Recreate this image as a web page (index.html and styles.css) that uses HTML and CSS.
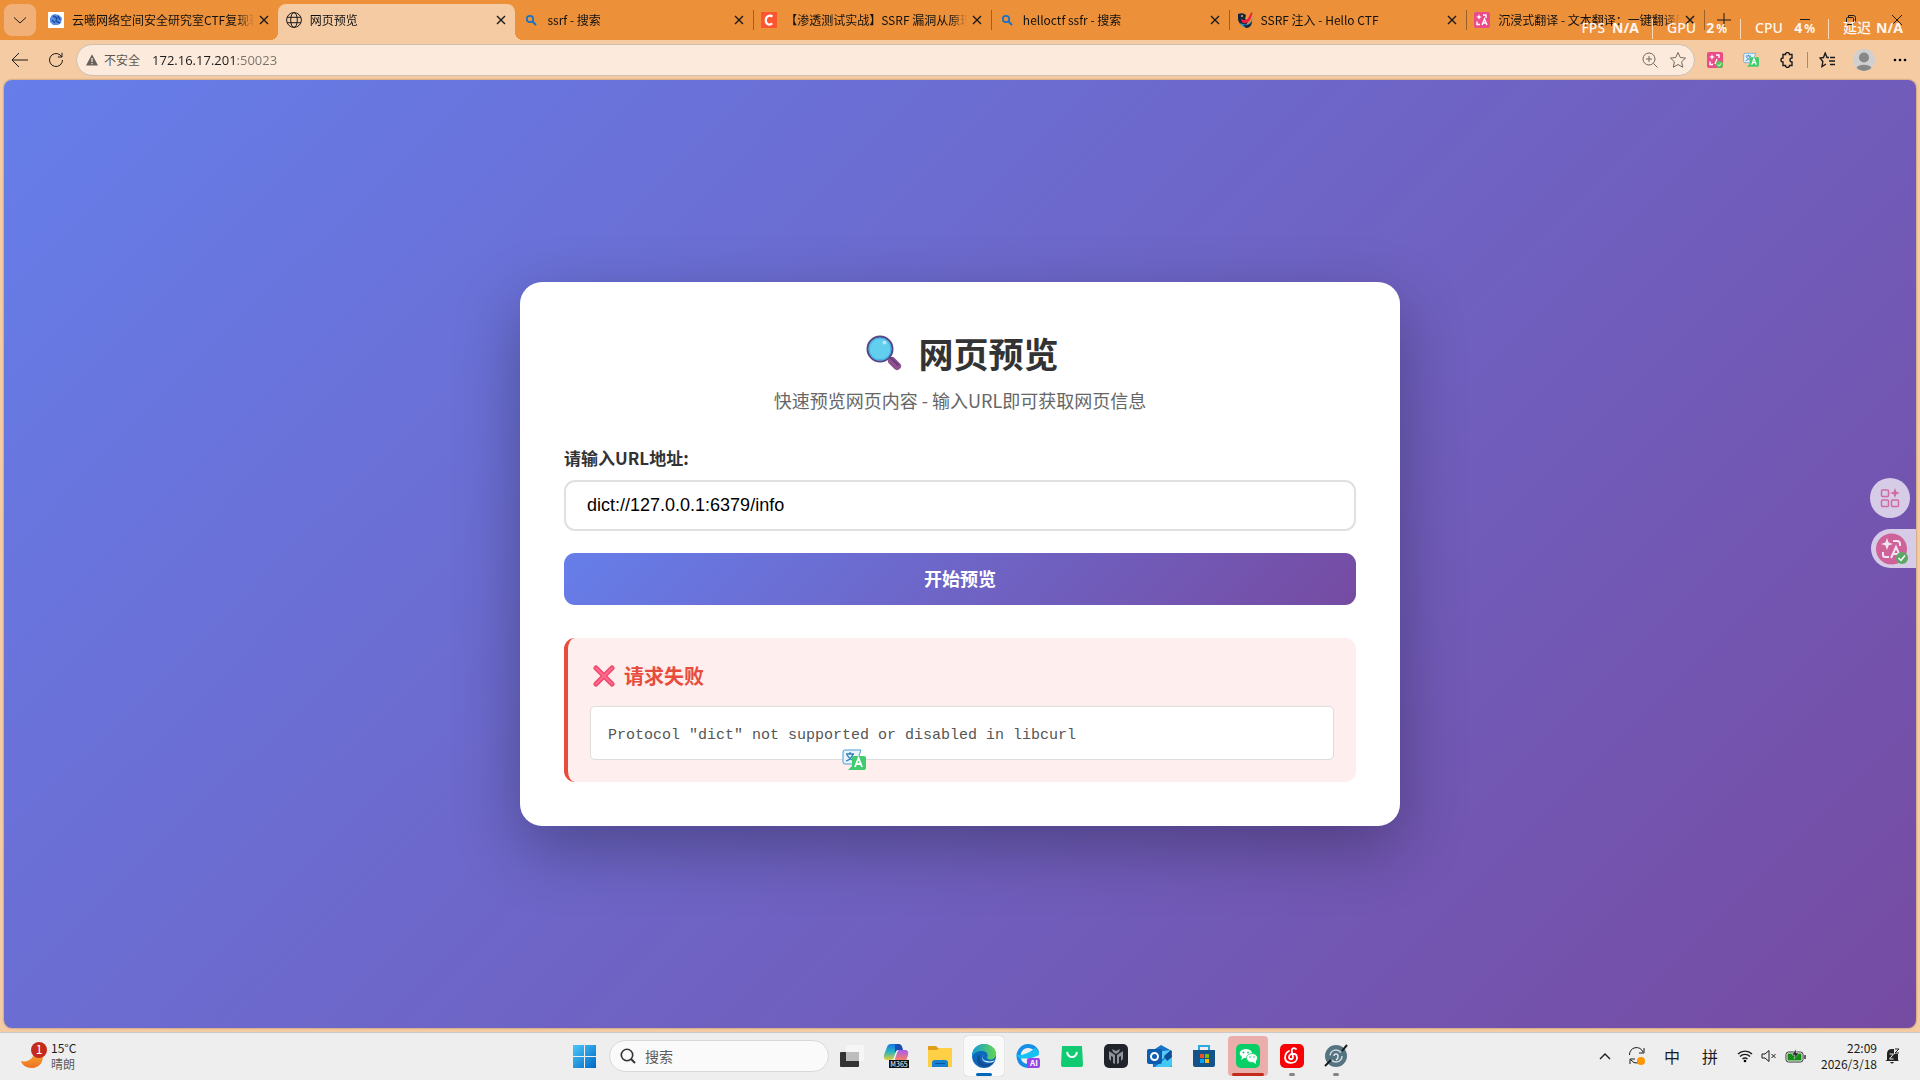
FILE: index.html
```html
<!DOCTYPE html>
<html lang="zh-CN">
<head>
    <meta charset="UTF-8">
    <title>网页预览</title>
    <link rel="stylesheet" href="styles.css">
</head>
<body>
    <!-- tab strip -->
    <header class="tab-strip">
        <button class="tab-menu" aria-label="标签页">
            <svg width="16" height="16" viewBox="0 0 16 16"><path class="line" d="M2 5.5l6 5.5 6-5.5"/></svg>
        </button>
        <nav class="tabs">
            <div class="tab no-divider">
                <svg class="tab-icon" viewBox="0 0 16 16"><rect width="16" height="16" fill="#fff"/><path d="M4 3l3-1 4 1 3 3-1 5-3 2-5 0-3-3 0-4z" fill="#5c8fe0"/><path d="M5 4l4 2-1 3 4 2M4 8l3 3M10 4l2 4" stroke="#1c4da8" stroke-width="1.5" fill="none"/></svg>
                <span class="tab-title">云曦网络空间安全研究室CTF复现靶场</span>
                <button class="tab-close" aria-label="关闭"><svg width="10" height="10" viewBox="0 0 10 10"><path class="line strong" d="M1 1l8 8M9 1l-8 8"/></svg></button>
            </div>
            <div class="tab active">
                <svg class="tab-icon" viewBox="0 0 16 16"><g class="line"><circle cx="8" cy="8" r="7.4"/><ellipse cx="8" cy="8" rx="3.3" ry="7.4"/><path d="M1.2 5.3h13.6M1.2 10.7h13.6"/></g></svg>
                <span class="tab-title">网页预览</span>
                <button class="tab-close" aria-label="关闭"><svg width="10" height="10" viewBox="0 0 10 10"><path class="line strong" d="M1 1l8 8M9 1l-8 8"/></svg></button>
            </div>
            <div class="tab">
                <svg class="tab-icon" viewBox="0 0 16 16"><circle cx="7" cy="7" r="3.2" fill="none" stroke="#1473c8" stroke-width="1.7"/><path d="M9.5 9.5l3.5 3.5" stroke="#1473c8" stroke-width="2"/></svg>
                <span class="tab-title">ssrf - 搜索</span>
                <button class="tab-close" aria-label="关闭"><svg width="10" height="10" viewBox="0 0 10 10"><path class="line strong" d="M1 1l8 8M9 1l-8 8"/></svg></button>
            </div>
            <div class="tab">
                <svg class="tab-icon" viewBox="0 0 16 16"><rect width="16" height="16" fill="#fc5531"/><path d="M11.5 4.6C9 2.6 5 3.6 4.800 8s3.700 5.600 6.400 3.400" fill="none" stroke="#fff" stroke-width="2.200"/></svg>
                <span class="tab-title">【渗透测试实战】SSRF 漏洞从原理到利用</span>
                <button class="tab-close" aria-label="关闭"><svg width="10" height="10" viewBox="0 0 10 10"><path class="line strong" d="M1 1l8 8M9 1l-8 8"/></svg></button>
            </div>
            <div class="tab">
                <svg class="tab-icon" viewBox="0 0 16 16"><circle cx="7" cy="7" r="3.2" fill="none" stroke="#1473c8" stroke-width="1.7"/><path d="M9.5 9.5l3.5 3.5" stroke="#1473c8" stroke-width="2"/></svg>
                <span class="tab-title">helloctf ssfr - 搜索</span>
                <button class="tab-close" aria-label="关闭"><svg width="10" height="10" viewBox="0 0 10 10"><path class="line strong" d="M1 1l8 8M9 1l-8 8"/></svg></button>
            </div>
            <div class="tab">
                <svg class="tab-icon" viewBox="0 0 16 16"><path d="M1 2q5-2 8 1l-1 4 3 2-2 5q-6 0-8-6z" fill="#14253c"/><path d="M15.500 0c-3 1-3 5-5 7s-6 1-6-1c-1 4 2 6 5 5s5-5 6-11z" fill="#f21d3c"/><path d="M15.500 5c-1 5-4 8-8 7.500L3 11c1 3 4 5 7 4.500s5.500-5 5.500-10.500z" fill="#2a9bd0"/><path d="M15 9c-2 4-5 5-9 4l3 3c4 0 6-3 6-7z" fill="#14253c"/><circle cx="5" cy="4" r="1" fill="#e7ad72"/></svg>
                <span class="tab-title">SSRF 注入 - Hello CTF</span>
                <button class="tab-close" aria-label="关闭"><svg width="10" height="10" viewBox="0 0 10 10"><path class="line strong" d="M1 1l8 8M9 1l-8 8"/></svg></button>
            </div>
            <div class="tab">
                <svg class="tab-icon" viewBox="0 0 16 16"><rect width="16" height="16" rx="2" fill="#ea4c89"/><path d="M5 2l.8 2.200 2.200.8-2.200.8L5 8l-.8-2.200L2 5l2.200-.8z" fill="#fff"/><path d="M9 3h3v3M3 9.500v3h3M8 13l2.500-6 2.500 6M9 11h3" fill="none" stroke="#fff" stroke-width="1.400"/></svg>
                <span class="tab-title">沉浸式翻译 - 文本翻译：一键翻译网页</span>
                <button class="tab-close" aria-label="关闭"><svg width="10" height="10" viewBox="0 0 10 10"><path class="line strong" d="M1 1l8 8M9 1l-8 8"/></svg></button>
            </div>
        </nav>
        <button class="new-tab" aria-label="新建标签页"><svg width="16" height="16" viewBox="0 0 16 16"><path class="line" d="M8 1v14M1 8h14"/></svg></button>
        <div class="window-controls">
            <button aria-label="最小化"><svg width="10" height="10" viewBox="0 0 10 10"><path class="line" d="M0 4.500h10"/></svg></button>
            <button aria-label="还原"><svg width="10" height="10" viewBox="0 0 10 10"><rect class="line" x=".5" y="2.500" width="7" height="7" rx="1"/><path class="line" d="M2.500 2V.5h5a2 2 0 012 2v5H8"/></svg></button>
            <button aria-label="关闭窗口"><svg width="10" height="10" viewBox="0 0 10 10"><path class="line" d="M0 0l10 10M10 0L0 10"/></svg></button>
        </div>
        <div class="perf">
            <span>FPS <b>N/A</b></span>
            <span>GPU <b>2<small>%</small></b></span>
            <span>CPU <b>4<small>%</small></b></span>
            <span>延迟 <b>N/A</b></span>
        </div>
    </header>

    <!-- address bar -->
    <div class="toolbar">
        <button class="nav-button" aria-label="返回"><svg width="18" height="16" viewBox="0 0 18 16"><path class="line" d="M17 8H1.500M8 1L1 8l7 7"/></svg></button>
        <button class="nav-button" aria-label="刷新"><svg width="16" height="16" viewBox="0 0 16 16"><path class="line" d="M14.500 8A6.500 6.500 0 1112 2.900L14 5M14 .8V5H9.800"/></svg></button>
        <div class="address">
            <svg width="12" height="12" viewBox="0 0 12 12"><path d="M6 .3L12 11.500H0z" fill="#66605a"/><path d="M6 4v4M6 9v1.300" stroke="#fcebdc" stroke-width="1.200"/></svg>
            <label for="location">不安全</label>
            <input id="location" class="location" type="text" value="172.16.17.201:50023">
            <button aria-label="缩放"><svg width="16" height="16" viewBox="0 0 16 16"><g class="line soft"><circle cx="7" cy="7" r="6"/><path d="M11.500 11.500l4 4M7 4v6M4 7h6"/></g></svg></button>
            <button aria-label="收藏"><svg width="18" height="18" viewBox="0 0 18 18"><path class="line soft" d="M9 1.500l2.300 5 5.200.6-3.900 3.700 1.100 5.400L9 13.500l-4.700 2.700 1.100-5.400L1.500 7.100l5.200-.6z"/></svg></button>
        </div>
        <div class="extensions">
            <button aria-label="沉浸式翻译"><svg width="16" height="16" viewBox="0 0 16 16"><rect width="16" height="16" rx="2" fill="#ea4c89"/><path d="M5 2l.8 2.200 2.200.8-2.200.8L5 8l-.8-2.200L2 5l2.200-.8z" fill="#fff"/><path d="M9 3h3v3M3 9.500v3h3M8 12l2-5" fill="none" stroke="#fff" stroke-width="1.400"/><circle cx="12.500" cy="12.500" r="3.500" fill="#56c656"/><path d="M10.800 12.500l1.300 1.300 2.200-2.500" fill="none" stroke="#fff"/></svg></button>
            <button aria-label="翻译"><svg width="16" height="16" viewBox="0 0 24 22"><use href="#translate"/></svg></button>
            <button aria-label="扩展"><svg width="16" height="16" viewBox="0 0 16 16"><path class="line strong" d="M4 2.500h2.500a2 2 0 014 0H13V6a2 2 0 100 4v3.500h-2.500a2 2 0 01-4 0H4V10a2 2 0 110-4z"/></svg></button>
            <i class="separator"></i>
            <button aria-label="收藏夹"><svg width="18" height="16" viewBox="0 0 18 16"><path class="line strong" d="M10 5.500H8L6.200 1 4.500 5.500 1 6l2.800 3.500-.8 5L7 12M11 5.500h5M10 9h6M11 12.500h5"/></svg></button>
            <button aria-label="用户"><svg width="22" height="22" viewBox="0 0 22 22"><circle cx="11" cy="11" r="11" fill="#d0d0d0"/><circle cx="11" cy="8.500" r="5" fill="#888"/><path d="M3.500 19a8 5 0 0115 0 11 11 0 01-15 0z" fill="#888"/></svg></button>
            <button aria-label="更多"><svg width="14" height="4" viewBox="0 0 14 4"><circle cx="2" cy="2" r="1.300"/><circle cx="7" cy="2" r="1.300"/><circle cx="12" cy="2" r="1.300"/></svg></button>
        </div>
    </div>

    <!-- page -->
    <main class="viewport">
        <div class="card">
            <h1>
                <svg width="41" height="36" viewBox="-5 0 41 36"><path d="M22 22l4 4" stroke="#6b3f7c" stroke-width="3"/><path d="M26 26l5 5" stroke="#8b528f" stroke-width="8" stroke-linecap="round"/><path d="M25 23l7 7" stroke="#6d3c79" stroke-width="2" stroke-linecap="round"/><circle cx="14" cy="14" r="12.500" fill="#62cfee" stroke="#554685" stroke-width="2"/><circle cx="14" cy="14" r="10.800" fill="none" stroke="#42aee8"/><circle cx="18.500" cy="7.500" r="2" fill="#b8e6fa"/></svg>
                网页预览
            </h1>
            <p class="subtitle">快速预览网页内容 - 输入URL即可获取网页信息</p>
            <form onsubmit="return false">
                <label for="url">请输入URL地址:</label>
                <input type="text" id="url" value="dict://127.0.0.1:6379/info">
                <button type="submit">开始预览</button>
            </form>
            <section class="error">
                <h3>
                    <svg width="22" height="22" viewBox="0 0 22 22"><path d="M3 3l16 16M19 3L3 19" stroke="#ee4968" stroke-width="5" stroke-linecap="round"/><path d="M3 3l16 16M19 3L3 19" stroke="#ff6a92" stroke-width="2" stroke-linecap="round"/></svg>
                    请求失败
                </h3>
                <pre>Protocol "dict" not supported or disabled in libcurl</pre>
                <svg class="translate-mark" width="24" height="22" viewBox="0 0 24 22"><g id="translate"><path d="M3 1h16l-5 14H3a2 2 0 01-2-2V3a2 2 0 012-2z" fill="#e8f3fb" stroke="#4c9dd6"/><path d="M4 5h8M8 3v2M11 5c-1 4-4 6-7 7M5 6c2 3 4 5 7 6" fill="none" stroke="#2f7fb8" stroke-width="1.300"/><path d="M12 7h10a2 2 0 012 2v10a2 2 0 01-2 2H6l4-4V9a2 2 0 012-2z" fill="#3fcb6e"/><path d="M13 18l3.500-9 3.500 9M14 15h5" fill="none" stroke="#fff" stroke-width="1.800"/></g></svg>
            </section>
        </div>
        <aside class="floating">
            <button class="float-round" aria-label="工具"><svg width="20" height="20" viewBox="0 0 20 20"><g fill="none" stroke="#d06a9f" stroke-width="1.500"><rect x="1.500" y="2" width="7" height="6.500" rx="1"/><rect x="1.500" y="12" width="7" height="6.500" rx="1"/><rect x="11.500" y="12" width="7" height="6.500" rx="1"/></g><path d="M15 0l1.300 3.700L20 5l-3.700 1.300L15 10l-1.300-3.700L10 5l3.700-1.300z" fill="#d06a9f"/></svg></button>
            <button class="float-half" aria-label="翻译此页"><svg width="33" height="32" viewBox="0 0 33 32"><circle cx="15.500" cy="16" r="15.500" fill="#d0629a"/><path d="M11 5l1.600 4.400L17 11l-4.400 1.600L11 17l-1.600-4.400L5 11l4.400-1.600z" fill="#f1e4f1"/><path d="M17 8h4q3 0 3 3v2M7 19v3q0 2 2 2h4M15 25l5-11 5 11M17 21h6" fill="none" stroke="#f1e4f1" stroke-width="2"/><circle cx="26" cy="25" r="6" fill="#5ba866"/><path d="M22.500 25l2.500 2.500 4-5" fill="none" stroke="#fff" stroke-width="1.500"/></svg></button>
        </aside>
    </main>

    <!-- taskbar -->
    <footer class="taskbar">
        <div class="weather">
            <svg width="28" height="28" viewBox="0 0 28 28"><defs><linearGradient id="moon" x2="0" y2="1"><stop stop-color="#f6b93b"/><stop offset="1" stop-color="#ee7020"/></linearGradient></defs><path d="M1 19c7 2 14-3 14-12l7 5c3 7-3 14-10 14C6 26 2 23 1 19z" fill="url(#moon)"/><circle cx="19" cy="8" r="8" fill="#c42b1c"/><text x="19" y="12" text-anchor="middle" fill="#fff" font-size="12">1</text></svg>
            <div class="two-lines"><span>15°C</span><span class="muted">晴朗</span></div>
        </div>
        <div class="apps">
            <button class="app" aria-label="开始"><svg width="24" height="24" viewBox="0 0 24 24"><defs><linearGradient id="win" x2="1" y2="1"><stop stop-color="#4bc8fa"/><stop offset="1" stop-color="#0067c5"/></linearGradient></defs><path d="M1 1h11v11H1zM13 1h11v11H13zM1 13h11v11H1zM13 13h11v11H13z" fill="url(#win)"/></svg></button>
            <div class="search">
                <svg width="16" height="16" viewBox="0 0 16 16"><circle cx="7" cy="7" r="5.700" fill="none" stroke="#333" stroke-width="1.600"/><path d="M11 11l4 4" stroke="#333" stroke-width="2"/></svg>
                <input type="text" placeholder="搜索" aria-label="搜索">
            </div>
            <button class="app" aria-label="任务视图"><svg width="24" height="24" viewBox="0 0 24 24"><rect y="8" width="19" height="15" rx="1" fill="#333"/><rect x="6" y="1" width="18" height="16" rx="1" fill="#f6f6f6"/><path d="M6 8h13v9H6z" fill="#bdbdbd"/></svg></button>
            <button class="app" aria-label="Microsoft 365"><svg width="26" height="26" viewBox="0 0 26 26"><defs><linearGradient id="cop1" x2="0" y2="1"><stop stop-color="#1976e8"/><stop offset=".5" stop-color="#2bb5bd"/><stop offset="1" stop-color="#e6cd32"/></linearGradient><linearGradient id="cop2" x2="0" y2="1"><stop stop-color="#a55cf5"/><stop offset="1" stop-color="#ff8554"/></linearGradient></defs><path d="M8 1h9q-3 2-4 7l-2 6q-1 3-4 3H4q-4 0-3-5l3-8q1-3 4-3z" fill="url(#cop1)"/><path d="M12 1h4q3 0 4 6h-5q-2 0-3 3z" fill="#174fb5"/><path d="M16 7h6q4 0 3 5l-2 6h-9q-2 0-2-2l2-6q1-3 2-3z" fill="url(#cop2)"/><rect x="6" y="17" width="20" height="8" fill="#111"/><text x="16" y="24" text-anchor="middle" fill="#fff" font-size="7">M365</text></svg></button>
            <button class="app" aria-label="文件资源管理器"><svg width="26" height="24" viewBox="0 0 26 24"><path d="M1 2h8l2 2h14v19H1z" fill="#df9d18"/><path d="M1 6h9l2-2h13v19H1z" fill="#ffd045"/><path d="M5 23v-4q0-3 3-3h10q3 0 3 3v4z" fill="#1681cf"/><path d="M8 19.500h10" stroke="#07549b"/></svg></button>
            <button class="app current" aria-label="Edge"><svg width="26" height="26" viewBox="0 0 26 26"><defs><linearGradient id="edge" x2="1"><stop stop-color="#149bd9"/><stop offset="1" stop-color="#65d84c"/></linearGradient></defs><circle cx="13" cy="13" r="12" fill="#0c68ba"/><path d="M1 12C2 5 7 1 13 1c8 0 13 6 12 11-1 5-7 6-9 3 2-4-1-7-5-7-5 0-8 2-10 6z" fill="url(#edge)"/><path d="M9 12c-2 6 4 12 14 7-5 8-17 6-17-2 0-3 1-4 3-5z" fill="#134c94"/><path d="M14 11c-4 1-3 7 2 7 3 1 6 0 8-1l-2 2c-6 2-13-1-10-7z" fill="#f6f6f6"/></svg></button>
            <button class="app" aria-label="浏览器"><svg width="26" height="26" viewBox="0 0 26 26"><path d="M21 19C16 25 6 24 4 16 2 9 7 3 13 3c6 0 9 4 9 7" fill="none" stroke="#168ee9" stroke-width="4"/><path d="M1 12Q11 13 20 5q4 3 4 7Q15 17 4 15z" fill="#15c2f3"/><path d="M7 10q5-1 8-4-6-1-8 4z" fill="#eee"/><rect x="12" y="15" width="13" height="10" rx="2" fill="#9944e8"/><text x="19" y="23" text-anchor="middle" fill="#fff" font-size="8" font-weight="bold">AI</text></svg></button>
            <button class="app" aria-label="商城"><svg width="24" height="24" viewBox="0 0 24 24"><path d="M2 2h20l1 19q0 2-2 2H3q-2 0-2-2z" fill="#12ca71"/><path d="M7 8q1 5 5 5t5-5" fill="none" stroke="#fff" stroke-width="2"/></svg></button>
            <button class="app" aria-label="游戏助手"><svg width="24" height="24" viewBox="0 0 24 24"><rect width="24" height="24" rx="5" fill="#202329"/><path d="M5 7l6 4v9l-2-1v-6l-2-1v5l-2-2zM19 7l-6 4v9l2-1v-6l2-1v5l2-2zM8 5l4 2 4-2-1 3-3 2-3-2z" fill="#8d9398"/></svg></button>
            <button class="app" aria-label="Outlook"><svg width="26" height="24" viewBox="0 0 26 24"><path d="M5 7l9-6 11 6v16H6z" fill="#1575c8"/><path d="M9 8l15-2-10 11z" fill="#56c9f5"/><path d="M8 23l17-14v12q0 2-2 2z" fill="#42c8f4"/><path d="M17 12l7-6 1 7-5 4z" fill="#0b4f99"/><rect y="5" width="15" height="15" rx="2" fill="#0c5db2"/><circle cx="7.500" cy="12.500" r="3.500" fill="none" stroke="#fff" stroke-width="2"/></svg></button>
            <button class="app" aria-label="应用商店"><svg width="24" height="24" viewBox="0 0 24 24"><path d="M7 7V2h10v5" fill="none" stroke="#2aa8df" stroke-width="2"/><path d="M1 6h22v15q0 2-2 2H3q-2 0-2-2z" fill="#16528a"/><path d="M8 10h4v4H8z" fill="#f25022"/><path d="M13 10h4v4h-4z" fill="#7fba00"/><path d="M8 15h4v4H8z" fill="#00a4ef"/><path d="M13 15h4v4h-4z" fill="#ffb900"/></svg></button>
            <button class="app alert" aria-label="微信"><svg width="24" height="24" viewBox="0 0 24 24"><rect width="24" height="24" rx="5" fill="#07cf65"/><path d="M5 16l1-3c-5-4-1-8 4-8s8 4 5 7-6 2-7 2z" fill="#fff"/><ellipse cx="16" cy="14" rx="5.500" ry="4.500" fill="#fff" stroke="#07cf65" stroke-width=".7"/><path d="M17 18l3 2v-4z" fill="#fff"/><g fill="#07cf65"><circle cx="7.500" cy="8.500" r=".9"/><circle cx="12" cy="8.500" r=".9"/><circle cx="14" cy="13" r=".8"/><circle cx="18" cy="13" r=".8"/></g></svg></button>
            <button class="app running" aria-label="网易云音乐"><svg width="24" height="24" viewBox="0 0 24 24"><rect width="24" height="24" rx="5" fill="#f80006"/><path d="M16 5c-3-2-5 0-4 3l1 5c0 3-4 3-4 0 0-4 8-5 8 1s-11 7-12 0c0-4 2-6 4-7" fill="none" stroke="#fff" stroke-width="1.800" stroke-linecap="round"/></svg></button>
            <button class="app running" aria-label="工具"><svg width="24" height="24" viewBox="0 0 24 24"><circle cx="12" cy="12" r="11" fill="#567381"/><circle cx="12" cy="12" r="6" fill="none" stroke="#cfdbe0" stroke-width="1.500" stroke-dasharray="14 5"/><path d="M10 12q0-2 2-2t2 2v1q0 2-2 3" fill="none" stroke="#dce5e8" stroke-width="1.500"/><path d="M1 22l6-6M18 7l5-6" stroke="#172227" stroke-width="2"/></svg></button>
        </div>
        <div class="tray">
            <button aria-label="显示隐藏的图标"><svg width="12" height="8" viewBox="0 0 12 8"><path class="line strong" d="M1 7l5-5 5 5"/></svg></button>
            <button aria-label="更新"><svg width="18" height="18" viewBox="0 0 18 18"><path class="line" d="M1.500 8A7 7 0 0115 5M16 1v5h-5M2 17v-5h5M3 13a7 7 0 007 3"/><circle cx="13" cy="14" r="4" fill="#ff9500"/></svg></button>
            <span class="ime">中</span>
            <span class="ime">拼</span>
            <button class="status" aria-label="网络、音量、电池">
                <svg width="16" height="14" viewBox="0 0 16 14"><path class="line strong" d="M1 5a10 10 0 0114 0M3 7.500a7 7 0 0110 0M5.500 10a4 4 0 015 0"/><circle cx="8" cy="12" r="1.300"/></svg>
                <svg width="16" height="14" viewBox="0 0 16 14"><path class="line" d="M1 5h3l4-3.500v11L4 9H1zM10.500 5l4 4M14.500 5l-4 4"/></svg>
                <svg width="21" height="14" viewBox="0 0 21 14"><rect x="1" y="3" width="17" height="10" rx="2.500" fill="#fff" stroke="#333"/><rect x="2.500" y="4.500" width="14" height="7" fill="#128c12"/><path d="M20 6v4" stroke="#333" stroke-width="1.500"/><path d="M11 0L7 6h3l-1 4 5-6h-3z" fill="#222" stroke="#eee" stroke-width=".5"/></svg>
            </button>
            <div class="two-lines clock"><span>22:09</span><span>2026/3/18</span></div>
            <svg width="15" height="16" viewBox="0 0 15 16"><path d="M2 12V6q0-5 5-5h2v5h4v6l1 1H0zM5 14h4q-2 3-4 0z" fill="#222"/><path d="M4.500 6h4l-4 5h4" fill="none" stroke="#eee"/><path d="M10 1h4l-4 4h4" fill="none" stroke="#222"/></svg>
        </div>
    </footer>
</body>
</html>
```

FILE: styles.css
```css
* {
    box-sizing: border-box;
    margin: 0;
    padding: 0;
}

body {
    display: flex;
    flex-direction: column;
    height: 100vh;
    overflow: hidden;
    background-color: #f5cba3;
    color: #1b1b1b;
    font-family: "Noto Sans CJK SC", sans-serif;
    font-size: 12px;
}

button {
    display: flex;
    align-items: center;
    justify-content: center;
    border: none;
    background: none;
    font-family: inherit;
    cursor: pointer;
}

svg {
    flex-shrink: 0;
}

.line {
    fill: none;
    stroke: #1b1b1b;
    stroke-width: 1;
}

.line.soft {
    stroke: #6f6860;
}

.line.strong {
    stroke-width: 1.4;
}

/* tab strip */
.tab-strip {
    position: relative;
    display: flex;
    align-items: center;
    height: 40px;
    padding-left: 4px;
    background-color: #ec903a;
}

.tab-menu {
    width: 32px;
    height: 32px;
    margin-right: 4px;
    border-radius: 8px;
    background-color: #f2b079;
}

.tabs {
    display: grid;
    grid-template-columns: repeat(7, 1fr);
    flex: 1;
    max-width: 1664px;
    height: 40px;
}

.tab {
    position: relative;
    display: flex;
    align-items: center;
    gap: 8px;
    min-width: 0;
    padding: 0 6px 0 8px;
}

.tab::after {
    content: "";
    position: absolute;
    right: -1px;
    top: 10px;
    width: 1px;
    height: 20px;
    background-color: #9a602a;
}

.tab.no-divider::after {
    display: none;
}

.tab.active {
    margin-top: 4px;
    padding-bottom: 4px;
    border-radius: 8px 8px 0 0;
    background-color: #f5cba3;
}

.tab.active::before,
.tab.active::after {
    content: "";
    position: absolute;
    top: auto;
    bottom: 0;
    width: 8px;
    height: 8px;
    background: radial-gradient(circle at 0 0, transparent 8px, #f5cba3 8px);
}

.tab.active::before {
    left: -8px;
}

.tab.active::after {
    right: -8px;
    background: radial-gradient(circle at 100% 0, transparent 8px, #f5cba3 8px);
}

.tab-icon {
    width: 16px;
    height: 16px;
}

.tab-title {
    flex: 1;
    padding-bottom: 1px;
    overflow: hidden;
    white-space: nowrap;
    color: #111;
    -webkit-mask-image: linear-gradient(to right, #000 91%, transparent);
    mask-image: linear-gradient(to right, #000 91%, transparent);
}

.tab-close {
    width: 16px;
    height: 16px;
    margin-left: -6px;
}

.new-tab {
    width: 40px;
    height: 40px;
}

.window-controls {
    display: flex;
    margin-left: auto;
}

.window-controls button {
    width: 46px;
    height: 40px;
}

/* hardware monitor drawn over the window controls */
.perf {
    position: absolute;
    top: 16px;
    right: 4px;
    display: flex;
    color: #fff6ee;
    font-family: "Noto Sans", "Noto Sans CJK SC", sans-serif;
    font-size: 14px;
    font-weight: 500;
    line-height: 24px;
}

.perf span {
    display: flex;
    justify-content: space-between;
    width: 88px;
    padding: 0 13px 0 15px;
}

.perf span:first-child {
    justify-content: flex-end;
    gap: 7px;
}

.perf span + span {
    background: linear-gradient(#fbd9b8, #fbd9b8) no-repeat left center / 1px 20px;
}

.perf small {
    margin-left: 2px;
    font-size: 12px;
}

/* address bar */
.toolbar {
    display: flex;
    align-items: center;
    height: 40px;
    padding-left: 2px;
}

.nav-button {
    width: 36px;
    height: 32px;
}

.address {
    display: flex;
    align-items: center;
    flex: 1;
    height: 32px;
    margin-left: 2px;
    padding: 0 7px 0 9px;
    border: 1px solid #cdbfae;
    border-radius: 16px;
    background-color: #fcebdc;
}

.address label {
    margin: 0 12px 0 6px;
    padding-bottom: 1px;
    color: #5f5850;
}

.address button {
    width: 29px;
    height: 28px;
}

.address button:last-child {
    width: 18px;
    margin-left: 5px;
}

/* host is dark, port is grey */
.location {
    flex: 1;
    border: none;
    outline: none;
    background: linear-gradient(to right, #1b1b1b 84px, #77706a 84px);
    -webkit-background-clip: text;
    background-clip: text;
    color: transparent;
    font-family: "Open Sans", sans-serif;
    font-size: 13px;
}

.extensions {
    display: flex;
    align-items: center;
    width: 225px;
    padding-left: 2px;
}

.extensions button {
    width: 36px;
    height: 32px;
}

.separator {
    width: 1px;
    height: 16px;
    margin: 0 2px;
    background-color: #a98a6c;
}

/* page */
.viewport {
    position: relative;
    display: flex;
    align-items: center;
    justify-content: center;
    flex: 1;
    margin: 0 4px 4px;
    border-radius: 8px;
    background: linear-gradient(135deg, #667eea 0%, #764ba2 100%);
    box-shadow: 0 0 2px #8a6a4c;
    overflow: hidden;
}

.card {
    width: 880px;
    max-width: 100%;
    padding: 44px;
    border-radius: 22px;
    background-color: white;
    box-shadow: 0 22px 66px rgba(0, 0, 0, 0.3);
}

h1 {
    display: flex;
    align-items: center;
    justify-content: center;
    gap: 16px;
    margin-bottom: 8px;
    color: #333;
    font-size: 35px;
    line-height: 54px;
}

.subtitle {
    margin-bottom: 34px;
    color: #666;
    font-size: 18px;
    line-height: 24px;
    text-align: center;
}

.card label {
    display: block;
    margin-bottom: 10px;
    color: #333;
    font-size: 17px;
    font-weight: 600;
    line-height: 24px;
}

.card input {
    display: block;
    width: 100%;
    height: 51px;
    margin-bottom: 22px;
    padding: 0 21px;
    border: 2px solid #e0e0e0;
    border-radius: 11px;
    font-family: "Liberation Sans", Arial, sans-serif;
    font-size: 18px;
}

.card form button {
    width: 100%;
    height: 52px;
    padding-bottom: 2px;
    border-radius: 11px;
    background: linear-gradient(135deg, #667eea 0%, #764ba2 100%);
    color: white;
    font-size: 18px;
    font-weight: 600;
}

.error {
    position: relative;
    margin-top: 33px;
    padding: 22px;
    border-left: 4px solid #e74c3c;
    border-radius: 11px;
    background-color: #fee;
}

.error h3 {
    display: flex;
    align-items: center;
    gap: 9px;
    margin-bottom: 14px;
    padding-left: 3px;
    color: #e74c3c;
    font-size: 20px;
    line-height: 32px;
}

.error pre {
    padding: 17px 17px 11px;
    border: 1px solid #ddd;
    border-radius: 5px;
    background-color: white;
    color: #555;
    font-family: "Liberation Mono", monospace;
    font-size: 15px;
    line-height: 24px;
    white-space: pre-wrap;
}

.translate-mark {
    position: absolute;
    left: 274px;
    bottom: 11px;
}

.floating {
    position: absolute;
    top: 398px;
    right: 0;
    display: flex;
    flex-direction: column;
    align-items: flex-end;
    gap: 11px;
}

.floating button {
    background-color: #d6cce8;
}

.float-round {
    width: 40px;
    height: 40px;
    margin-right: 6px;
    border-radius: 50%;
}

.float-half {
    width: 45px;
    height: 39px;
    padding-right: 2px;
    border-radius: 20px 0 0 20px;
}

/* taskbar */
.taskbar {
    display: grid;
    grid-template-columns: 1fr auto 1fr;
    align-items: center;
    height: 48px;
    padding-bottom: 2px;
    border-top: 1px solid #cbc8cc;
    background-color: #eee;
}

.weather {
    display: flex;
    align-items: center;
    gap: 3px;
    padding-left: 20px;
}

.two-lines {
    display: flex;
    flex-direction: column;
    line-height: 16px;
}

.muted {
    color: #5c5c5c;
}

.apps {
    display: flex;
    align-items: center;
    gap: 4px;
}

.app {
    position: relative;
    width: 40px;
    height: 40px;
    border-radius: 4px;
}

.search {
    display: flex;
    align-items: center;
    gap: 9px;
    width: 220px;
    height: 32px;
    margin: 0 -1px 0 1px;
    padding-left: 10px;
    border: 1px solid #d9d9d9;
    border-radius: 16px;
    background-color: #fafafa;
}

.search input {
    width: 160px;
    border: none;
    outline: none;
    background: none;
    font-family: inherit;
    font-size: 14px;
}

.search input::placeholder {
    color: #5c5c5c;
}

.current {
    background-color: #f9f9f9;
    box-shadow: 0 0 1px #aaa;
}

.alert {
    background-color: #e9aeac;
}

.current::after,
.alert::after,
.running::after {
    content: "";
    position: absolute;
    bottom: 0;
    width: 16px;
    height: 3px;
    border-radius: 2px;
    background-color: #0067b8;
}

.alert::after {
    width: 32px;
    background-color: #c42b1c;
}

.running::after {
    width: 6px;
    background-color: #858585;
}

.tray {
    display: flex;
    align-items: center;
    justify-content: flex-end;
    padding-right: 20px;
}

.tray > button {
    width: 32px;
    height: 32px;
}

.ime {
    width: 38px;
    font-size: 16px;
    text-align: center;
}

.tray .status {
    gap: 8px;
    width: 84px;
}

.clock {
    width: 64px;
    margin-right: 8px;
    text-align: right;
}
```
